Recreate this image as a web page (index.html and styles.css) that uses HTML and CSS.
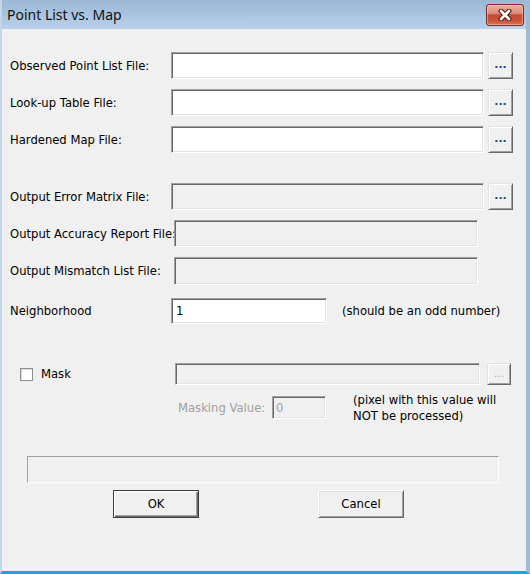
FILE: index.html
```html
<!DOCTYPE html>
<html lang="en">
<head>
    <meta charset="UTF-8">
    <meta name="viewport" content="width=device-width, initial-scale=1.0">
    <title>Point List vs. Map</title>
    <link rel="stylesheet" href="styles.css">
</head>
<body>
    <div class="window">
        <div class="titlebar">
            <span class="title">Point List vs. Map</span>
            <button class="close" title="Close">
                <svg width="16" height="12" viewBox="0 0 16 12">
                    <path d="M4 2 L12 10 M12 2 L4 10" stroke="#5a2218" stroke-width="5" stroke-linecap="round" fill="none"/>
                    <path d="M4 2 L12 10 M12 2 L4 10" stroke="#ffffff" stroke-width="2.6" stroke-linecap="round" fill="none"/>
                </svg>
            </button>
        </div>

        <div class="client">
            <div class="row first">
                <label class="label">Observed Point List File:</label>
                <input class="field" type="text">
                <button class="browse">...</button>
            </div>
            <div class="row">
                <label class="label">Look-up Table File:</label>
                <input class="field" type="text">
                <button class="browse">...</button>
            </div>
            <div class="row">
                <label class="label">Hardened Map File:</label>
                <input class="field" type="text">
                <button class="browse">...</button>
            </div>

            <div class="row section">
                <label class="label">Output Error Matrix File:</label>
                <input class="field" type="text" disabled>
                <button class="browse">...</button>
            </div>
            <div class="row">
                <label class="label">Output Accuracy Report File:</label>
                <input class="field short" type="text" disabled>
            </div>
            <div class="row tall">
                <label class="label">Output Mismatch List File:</label>
                <input class="field short" type="text" disabled>
            </div>

            <div class="row neighborhood">
                <label class="label">Neighborhood</label>
                <input class="field small" type="text" value="1">
                <span class="note">(should be an odd number)</span>
            </div>

            <div class="row mask">
                <label class="label mask-label"><span class="checkbox"></span>Mask</label>
                <input class="field mask-field" type="text" disabled>
                <button class="browse off" disabled>...</button>
            </div>
            <div class="row mask-value">
                <span class="dim-label">Masking Value:</span>
                <input class="field tiny" type="text" value="0" disabled>
                <span class="note two-line">(pixel with this value will<br>NOT be processed)</span>
            </div>

            <div class="status"></div>

            <div class="actions">
                <button class="push default">OK</button>
                <button class="push cancel">Cancel</button>
            </div>
        </div>
    </div>
</body>
</html>
```

FILE: styles.css
```css
/* Dialog frame */
* {
    margin: 0;
    padding: 0;
    box-sizing: border-box;
}

body {
    background: #ffffff;
    font-family: 'DejaVu Sans', sans-serif;
    font-size: 11.6px;
    color: #000;
}

.window {
    width: 530px;
    height: 574px;
    background: #f0f0f0;
    border-left: 2px solid #c3d6ea;
    border-right: 4px solid #9ebbd8;
    border-bottom: 3px solid #1ea6dc;
    display: flex;
    flex-direction: column;
    overflow: hidden;
}

.titlebar {
    height: 29px;
    flex: none;
    display: flex;
    align-items: flex-start;
    background: linear-gradient(#9bb7d4, #b9d1ea);
    margin-left: -2px;
    margin-right: -4px;
}

.title {
    font-family: 'Noto Sans', 'Open Sans', sans-serif;
    font-size: 14px;
    padding: 5px 0 0 7px;
    color: #111;
}

.close {
    margin: 4px 6px 0 auto;
    width: 38px;
    height: 22px;
    border: 1px solid #7a2e24;
    border-radius: 3px;
    background: linear-gradient(#e9ad9f 0%, #dc8e7c 42%, #c44b34 50%, #c9563d 80%, #d7745c 100%);
    box-shadow: inset 0 0 0 1px rgba(255, 220, 210, 0.45);
    display: flex;
    align-items: center;
    justify-content: center;
}

/* Client area */
.client {
    flex: 1;
    padding-left: 7px;
    display: flex;
    flex-direction: column;
}

.row {
    display: flex;
    align-items: center;
    height: 27px;
    margin-top: 10px;
}

.row.first { margin-top: 23px; }
.row.section { margin-top: 30px; }
.row.tall { height: 28px; }

.label {
    width: 162px;
    flex: none;
    white-space: nowrap;
    padding-left: 1px;
}

.field {
    width: 313px;
    height: 100%;
    flex: none;
    font: inherit;
    padding: 0 4px;
    background: #fff;
    border-top: 1px solid #a0a0a0;
    border-left: 1px solid #a0a0a0;
    border-bottom: 1px solid #fff;
    border-right: 1px solid #fff;
    box-shadow: inset 1px 1px 0 #696969, inset -1px -1px 0 #e3e3e3;
    outline: none;
}

.field:disabled {
    background: #f0f0f0;
    color: #a0a0a0;
}

.field.short { width: 304px; margin-left: 3px; }

.browse {
    width: 25px;
    height: 27px;
    margin-left: 4px;
    flex: none;
    background: #f0f0f0;
    font: bold 11px 'DejaVu Sans', sans-serif;
    color: #1c4c86;
    padding-bottom: 2px;
    border-top: 1px solid #e3e3e3;
    border-left: 1px solid #e3e3e3;
    border-bottom: 1px solid #696969;
    border-right: 1px solid #696969;
    box-shadow: inset 1px 1px 0 #fff, inset -1px -1px 0 #a0a0a0;
}

.browse.off {
    color: #b0b0b0;
    font-weight: normal;
    width: 24px;
    height: 22px;
    margin-left: 7px;
}

/* Neighborhood */
.row.neighborhood {
    height: 26px;
    margin-top: 13px;
}

.field.small { width: 156px; }

.note {
    margin-left: 15px;
    white-space: nowrap;
}

/* Mask */
.row.mask {
    height: 22px;
    margin-top: 39px;
}

.mask-label {
    width: 166px;
    display: flex;
    align-items: center;
    padding-left: 11px;
}

.checkbox {
    width: 13px;
    height: 13px;
    margin-right: 8px;
    background: #fff;
    border: 1px solid #8e8f8f;
    box-shadow: inset 1px 1px 0 #d8d8d8;
}

.field.mask-field { width: 305px; }

.row.mask-value {
    height: 23px;
    margin-top: 11px;
}

.dim-label {
    width: 94px;
    flex: none;
    margin-left: 169px;
    color: #a0a0a0;
    white-space: nowrap;
}

.field.tiny {
    width: 54px;
    padding: 0 3px;
}

.note.two-line {
    margin-left: 27px;
    line-height: 16px;
    padding-top: 1px;
}

/* Bottom */
.status {
    width: 472px;
    height: 27px;
    margin: 37px 0 0 18px;
    border-top: 1px solid #a0a0a0;
    border-left: 1px solid #a0a0a0;
    border-bottom: 1px solid #fff;
    border-right: 1px solid #fff;
}

.actions {
    display: flex;
    margin-top: 7px;
}

.push {
    width: 86px;
    height: 28px;
    font: inherit;
    background: #f0f0f0;
    border-top: 1px solid #fff;
    border-left: 1px solid #fff;
    border-bottom: 1px solid #696969;
    border-right: 1px solid #696969;
    box-shadow: inset 1px 1px 0 #e3e3e3, inset -1px -1px 0 #a0a0a0;
}

.push.default {
    margin-left: 104px;
    border: 1px solid #3c3c3c;
    box-shadow: inset 1px 1px 0 #fff, inset -1px -1px 0 #696969, inset -2px -2px 0 #a0a0a0;
}

.push.cancel {
    margin-left: 119px;
}
```
